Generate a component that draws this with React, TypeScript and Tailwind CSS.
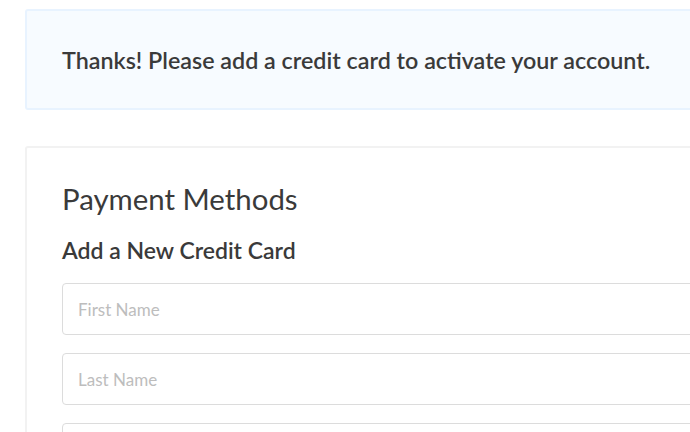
import React from "react";

export default function App() {
  return (
    <div className="w-[690px] h-[432px] overflow-hidden bg-white" style={{ fontFamily: "Lato, 'Open Sans', sans-serif" }}>
      <div className="w-[760px] pl-[25px] pt-[9px]">
        <div className="h-[101px] border-2 border-[#e8f3ff] bg-[#f7fbff] rounded-[3px] flex items-center pl-[35px]">
          <p className="text-[23.3px] leading-[30px] font-semibold text-[#3a3a3a]">
            Thanks! Please add a credit card to activate your account.
          </p>
        </div>
        <div className="mt-[36px] border-2 border-[#f2f2f2] rounded-[3px] pl-[35px] pt-[31px] pb-8">
          <h1 className="text-[29.4px] leading-[40px] font-normal text-[#3a3a3a]">Payment Methods</h1>
          <h2 className="mt-[16px] text-[23px] leading-[30px] font-semibold text-[#3a3a3a]">Add a New Credit Card</h2>
          <div className="mt-[18px] flex flex-col gap-[18px]">
            <input
              placeholder="First Name"
              className="h-[52px] w-full border border-[#dcdcdc] rounded-[4px] pl-[15px] text-[17px] placeholder:text-[#bdbdbd] outline-none"
            />
            <input
              placeholder="Last Name"
              className="h-[52px] w-full border border-[#dcdcdc] rounded-[4px] pl-[15px] text-[17px] placeholder:text-[#bdbdbd] outline-none"
            />
            <input
              placeholder="Card Number"
              className="h-[52px] w-full border border-[#dcdcdc] rounded-[4px] pl-[15px] text-[17px] placeholder:text-[#bdbdbd] outline-none"
            />
          </div>
        </div>
      </div>
    </div>
  );
}
